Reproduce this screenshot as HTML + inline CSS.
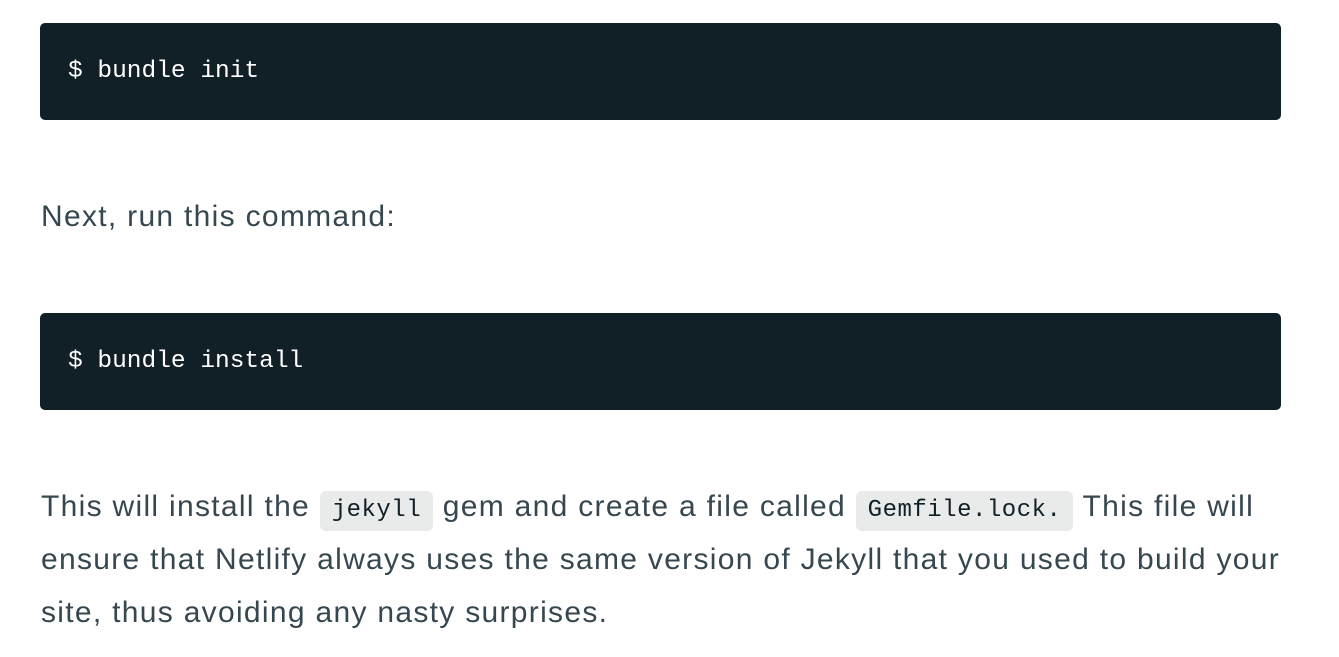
<!DOCTYPE html>
<html><head><meta charset="utf-8"><style>
body{margin:0;background:#fff;width:1339px;height:657px;overflow:hidden;font-family:"Liberation Sans",sans-serif;color:#37474f}
.pre{position:absolute;left:40px;width:1241px;height:97px;background:#111f26;border-radius:5px;color:#fff;font-family:"Liberation Mono",monospace;font-size:24.5px;line-height:97px;box-sizing:border-box;padding-left:28px}
p{position:absolute;left:41px;margin:0;font-size:30px;white-space:nowrap;letter-spacing:1.3px}
code{font-family:"Liberation Mono",monospace;font-size:24px;background:#e9ebeb;border-radius:6px;padding:6px 12px 7px;color:#111f26;letter-spacing:0.5px;line-height:1}
</style></head><body>
<div class="pre" style="top:23px">$ bundle init</div>
<p style="top:197px;line-height:40px">Next, run this command:</p>
<div class="pre" style="top:313px">$ bundle install</div>
<p style="top:480px;line-height:53px">This will install the <code>jekyll</code> gem and create a file called <code>Gemfile.lock.</code> This file will<br>ensure that Netlify always uses the same version of Jekyll that you used to build your<br>site, thus avoiding any nasty surprises.</p>
</body></html>
